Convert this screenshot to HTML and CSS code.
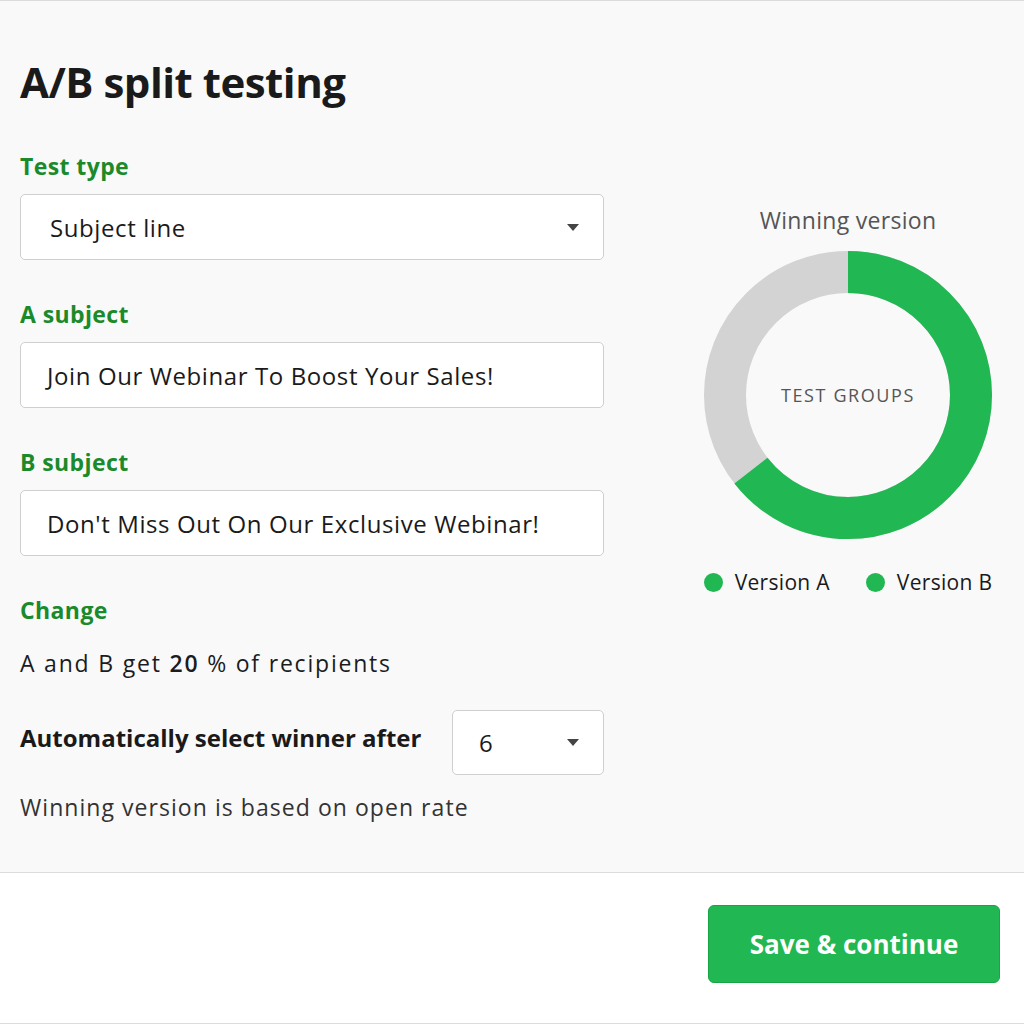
FILE: index.html
```html
<!DOCTYPE html>
<html lang="en">
<head>
<meta charset="utf-8">
<title>A/B split testing</title>
<link rel="stylesheet" href="styles.css">
</head>
<body>
<div class="card">
  <main class="main">
    <section class="form">
      <h1 class="title">A/B split testing</h1>

      <div class="field">
        <div class="label">Test type</div>
        <div class="box select">
          <span class="value value-select">Subject line</span>
          <span class="caret"></span>
        </div>
      </div>

      <div class="field">
        <div class="label">A subject</div>
        <div class="box">
          <span class="value">Join Our Webinar To Boost Your Sales!</span>
        </div>
      </div>

      <div class="field">
        <div class="label">B subject</div>
        <div class="box">
          <span class="value">Don't Miss Out On Our Exclusive Webinar!</span>
        </div>
      </div>

      <div class="field">
        <div class="label">Change</div>
        <p class="text">A and B get <span class="num">20</span> % of recipients</p>
      </div>

      <div class="winner-row">
        <span class="winner-label">Automatically select winner after</span>
        <div class="box select small">
          <span class="value value-num">6</span>
          <span class="caret"></span>
        </div>
      </div>

      <p class="text note">Winning version is based on open rate</p>
    </section>

    <aside class="chart">
      <div class="chart-title">Winning version</div>
      <div class="donut">
        <svg width="290" height="290" viewBox="0 0 290 290">
          <circle cx="145" cy="145" r="123" fill="none" stroke="#d3d3d3" stroke-width="42"/>
          <circle cx="145" cy="145" r="123" fill="none" stroke="#21b752" stroke-width="42"
                  stroke-dasharray="498 800" transform="rotate(-90 145 145)"/>
        </svg>
        <span class="donut-label">TEST GROUPS</span>
      </div>
      <div class="legend">
        <span class="legend-item"><span class="dot"></span>Version A</span>
        <span class="legend-item"><span class="dot"></span>Version B</span>
      </div>
    </aside>
  </main>

  <footer class="footer">
    <button class="btn" type="button">Save &amp; continue</button>
  </footer>
</div>
</body>
</html>
```

FILE: styles.css
```css
* { box-sizing: border-box; }

html, body {
  margin: 0;
  padding: 0;
  background: #ffffff;
}

body {
  font-family: "Open Sans", "Liberation Sans", sans-serif;
  color: #1c1c1c;
}

.card {
  width: 1024px;
  height: 1024px;
  border-top: 1px solid #dcdcdc;
  border-bottom: 1px solid #dcdcdc;
  display: flex;
  flex-direction: column;
}

.main {
  background: #f9f9f9;
  display: flex;
  padding: 0 0 0 20px;
  height: 871px;
}

.form {
  width: 584px;
  display: flex;
  flex-direction: column;
}

.title {
  margin: 55px 0 0 0;
  font-size: 42px;
  line-height: 52px;
  font-weight: 700;
  color: #1a1a1a;
  letter-spacing: -0.5px;
}

.field {
  display: flex;
  flex-direction: column;
}

.field:first-of-type { margin-top: 43px; }

.label {
  font-size: 23px;
  line-height: 30px;
  font-weight: 700;
  color: #1a8a2b;
  letter-spacing: 0.4px;
  margin-bottom: 13px;
}

.field + .field { margin-top: 39px; }

.box {
  height: 66px;
  background: #ffffff;
  border: 1px solid #cfcfcf;
  border-radius: 5px;
  display: flex;
  align-items: center;
  padding: 0 26px;
}

.select { justify-content: space-between; padding-right: 24px; }

.value {
  font-size: 24px;
  color: #1a1a1a;
  letter-spacing: 0.6px;
}

.value-select { padding-left: 3px; }

.caret {
  width: 0;
  height: 0;
  border-left: 6px solid transparent;
  border-right: 6px solid transparent;
  border-top: 7px solid #444;
}

.text {
  margin: 10px 0 0 0;
  font-size: 23px;
  line-height: 30px;
  color: #1c1c1c;
  letter-spacing: 1.8px;
}

.num { font-weight: 600; }

.winner-row {
  display: flex;
  align-items: center;
  justify-content: space-between;
  margin-top: 32px;
}

.winner-label {
  font-size: 24px;
  font-weight: 700;
  color: #1a1a1a;
  letter-spacing: 0;
  margin-top: -10px;
}

.small {
  width: 152px;
  height: 65px;
  padding-left: 26px;
}

.note {
  margin-top: 17px;
  color: #333;
  letter-spacing: 1.05px;
}

.chart {
  flex: 1;
  display: flex;
  flex-direction: column;
  align-items: center;
  padding-top: 204px;
  padding-left: 68px;
}

.chart-title {
  font-size: 23px;
  line-height: 30px;
  color: #555;
  letter-spacing: 0.3px;
}

.donut {
  position: relative;
  width: 290px;
  height: 290px;
  margin-top: 15px;
}

.donut svg { display: block; }

.donut-label {
  position: absolute;
  left: 0;
  right: 0;
  top: 50%;
  transform: translateY(-50%);
  text-align: center;
  font-size: 18px;
  letter-spacing: 1.6px;
  color: #555;
}

.legend {
  display: flex;
  gap: 36px;
  margin-top: 28px;
}

.legend-item {
  display: flex;
  align-items: center;
  font-size: 21px;
  color: #1a1a1a;
  letter-spacing: 0.3px;
}

.dot {
  width: 19px;
  height: 19px;
  border-radius: 50%;
  background: #21b752;
  margin-right: 12px;
}

.footer {
  flex: 1;
  background: #ffffff;
  border-top: 1px solid #dcdcdc;
  display: flex;
  justify-content: flex-end;
  align-items: flex-start;
  padding: 32px 24px 0 0;
}

.btn {
  width: 292px;
  height: 78px;
  background: #21b752;
  border: 1px solid #17a545;
  border-radius: 6px;
  color: #ffffff;
  font-family: "Open Sans", "Liberation Sans", sans-serif;
  font-size: 26px;
  font-weight: 700;
  cursor: pointer;
}
```
